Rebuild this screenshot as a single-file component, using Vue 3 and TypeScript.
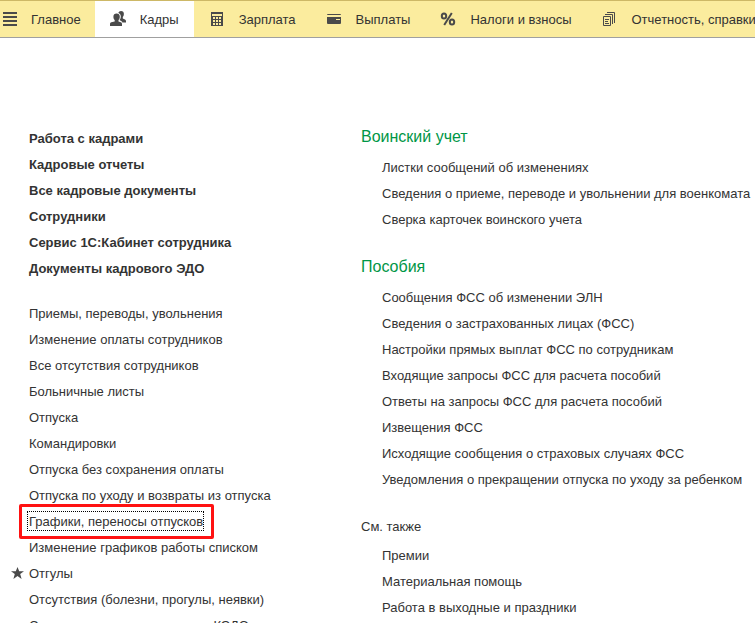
<script setup lang="ts">
interface Section { id: string; label: string; active?: boolean }
interface Item { label: string; starred?: boolean; focused?: boolean }
interface Group { title: string; minor?: boolean; items: string[] }

const sections: Section[] = [
  { id: 'main', label: 'Главное' },
  { id: 'staff', label: 'Кадры', active: true },
  { id: 'salary', label: 'Зарплата' },
  { id: 'payments', label: 'Выплаты' },
  { id: 'taxes', label: 'Налоги и взносы' },
  { id: 'reports', label: 'Отчетность, справки' },
]

const primary: string[] = [
  'Работа с кадрами',
  'Кадровые отчеты',
  'Все кадровые документы',
  'Сотрудники',
  'Сервис 1С:Кабинет сотрудника',
  'Документы кадрового ЭДО',
]

const items: Item[] = [
  { label: 'Приемы, переводы, увольнения' },
  { label: 'Изменение оплаты сотрудников' },
  { label: 'Все отсутствия сотрудников' },
  { label: 'Больничные листы' },
  { label: 'Отпуска' },
  { label: 'Командировки' },
  { label: 'Отпуска без сохранения оплаты' },
  { label: 'Отпуска по уходу и возвраты из отпуска' },
  { label: 'Графики, переносы отпусков', focused: true },
  { label: 'Изменение графиков работы списком' },
  { label: 'Отгулы', starred: true },
  { label: 'Отсутствия (болезни, прогулы, неявки)' },
  { label: 'Согласия на присоединение к КЭДО' },
]

const groups: Group[] = [
  {
    title: 'Воинский учет',
    items: [
      'Листки сообщений об изменениях',
      'Сведения о приеме, переводе и увольнении для военкомата',
      'Сверка карточек воинского учета',
    ],
  },
  {
    title: 'Пособия',
    items: [
      'Сообщения ФСС об изменении ЭЛН',
      'Сведения о застрахованных лицах (ФСС)',
      'Настройки прямых выплат ФСС по сотрудникам',
      'Входящие запросы ФСС для расчета пособий',
      'Ответы на запросы ФСС для расчета пособий',
      'Извещения ФСС',
      'Исходящие сообщения о страховых случаях ФСС',
      'Уведомления о прекращении отпуска по уходу за ребенком',
    ],
  },
  {
    title: 'См. также',
    minor: true,
    items: ['Премии', 'Материальная помощь', 'Работа в выходные и праздники'],
  },
]
</script>

<template>
  <div class="app">
    <nav class="bar">
      <a v-for="s in sections" :key="s.id" href="#" class="tab" :class="[s.id, { active: s.active }]">
        <svg v-if="s.id === 'main'" class="icon" width="16" height="16" viewBox="0 0 16 16" aria-hidden="true">
          <path d="M2 1h14v2H2zM2 5h14v2H2zM2 9h14v2H2zM2 13h14v2H2z" />
        </svg>
        <svg v-else-if="s.id === 'staff'" class="icon" width="16" height="16" viewBox="0 0 16 16" aria-hidden="true">
          <path d="M8.300 2C8.800.700 9.700 0 11 0c1.900 0 2.900 1.200 2.900 3 0 1.300-.4 2.300-1.100 3v1.500l2.200 1c.7.400 1 .9 1 1.700V11.500h-3.600C12 10.500 11.400 10 10.300 9.500L9.500 9c.9-1 1.300-2.100 1.300-3.500C10.800 3.700 9.900 2.500 8.300 2z" />
          <path d="M6.600 2.500c2 0 3.200 1.200 3.200 3.200 0 1.400-.5 2.600-1.300 3.300v1.500l2.300.8c.9.400 1.200 1 1.200 1.900V15H0v-1.800c0-.9.400-1.500 1.300-1.900l3.400-.8V9C3.900 8.300 3.400 7.100 3.400 5.700c0-2 1.200-3.200 3.200-3.200z" />
        </svg>
        <svg v-else-if="s.id === 'salary'" class="icon" width="16" height="16" viewBox="0 0 16 16" aria-hidden="true">
          <path fill-rule="evenodd" d="M2 1h12v14H2zM3 3v2h10V3zM4 6v2h2V6zM7 6v2h2V6zM10 6v2h2V6zM4 9v2h2V9zM7 9v2h2V9zM10 9v2h2V9zM4 12v2h2v-2zM7 12v2h2v-2zM10 12v2h2v-2z" />
        </svg>
        <svg v-else-if="s.id === 'payments'" class="icon" width="16" height="16" viewBox="0 0 16 16" aria-hidden="true">
          <path fill-rule="evenodd" d="M2 3h12q1 0 1 1H1q0-1 1-1zM1 6h14v6q0 1-1 1H2q-1 0-1-1zM10 8v1h4V8z" />
        </svg>
        <svg v-else-if="s.id === 'taxes'" class="icon stroke" width="16" height="16" viewBox="0 0 16 16" aria-hidden="true">
          <g stroke-width="2">
            <ellipse cx="4" cy="5" rx="2.200" ry="2.600" /><ellipse cx="12" cy="11" rx="2.200" ry="2.600" />
            <path d="M11.800 2L4.200 14" />
          </g>
        </svg>
        <svg v-else class="icon stroke" width="16" height="16" viewBox="0 0 16 16" aria-hidden="true">
          <path d="M1.500 5.500h7v9h-7zM3 8.500h4M3 10.500h3M3 12.500h4M3 3.500h7.500V13M5 1.500h7.500V12" />
        </svg>
        <span>{{ s.label }}</span>
      </a>
    </nav>

    <main class="content">
      <div class="left">
        <ul class="list strong">
          <li v-for="p in primary" :key="p"><a href="#">{{ p }}</a></li>
        </ul>
        <ul class="list">
          <li v-for="i in items" :key="i.label">
            <svg v-if="i.starred" class="star" width="13" height="12" viewBox="0 0 13 12" aria-hidden="true">
              <path d="M6.500 0l1.700 4.200H13L9.200 7l1.400 5-4.100-3-4.100 3 1.400-5L0 4.200h4.800z" />
            </svg>
            <a href="#" :class="{ focused: i.focused }">{{ i.label }}</a>
          </li>
        </ul>
      </div>

      <div class="right">
        <section v-for="g in groups" :key="g.title" class="group" :class="{ minor: g.minor }">
          <h2>{{ g.title }}</h2>
          <ul class="list">
            <li v-for="label in g.items" :key="label"><a href="#">{{ label }}</a></li>
          </ul>
        </section>
      </div>
    </main>
  </div>
</template>

<style>
body {
  margin: 0;
  background: #fff;
}
</style>

<style scoped>
.app {
  height: 100vh;
  display: flex;
  flex-direction: column;
  overflow: hidden;
  font-family: "Liberation Sans", Arial, sans-serif;
  font-size: 13px;
  line-height: 26px;
  color: #333;
}
a {
  color: inherit;
  text-decoration: none;
  white-space: nowrap;
}
.bar {
  flex: none;
  display: flex;
  height: 36px;
  background: #fbec9e;
  border-top: 1px solid #cdb866;
  border-bottom: 1px solid #a0a0a0;
  overflow: hidden;
}
.tab {
  flex: none;
  display: flex;
  align-items: center;
  gap: 14px;
  padding: 0 15px;
}
.tab.main {
  padding: 0 14px 0 1px;
}
.tab.active {
  background: #fff;
}
.tab span {
  line-height: 24px;
  padding-top: 2px;
}
.icon {
  flex: none;
  fill: #4a4a4a;
}
.icon.stroke {
  fill: none;
  stroke: #4a4a4a;
}
.content {
  display: grid;
  grid-template-columns: 332px 1fr;
  padding: 87px 0 0 29px;
}
.left {
  padding-top: 1px;
}
.list {
  list-style: none;
  margin: 0;
  padding: 0;
}
.list li {
  position: relative;
  height: 26px;
}
.strong {
  font-weight: bold;
  margin-bottom: 19px;
}
.star {
  position: absolute;
  left: -18px;
  top: 6px;
  fill: #4a4a4a;
}
.focused {
  position: relative;
}
.focused::before {
  content: "";
  position: absolute;
  inset: -3px -1px -2px -2px;
  border: 1px dotted #000;
}
.focused::after {
  content: "";
  position: absolute;
  inset: -10px -11px -10px -10px;
  border: 3px solid #f11;
  border-radius: 2px;
}
.group h2 {
  margin: 0 0 6px;
  font-size: 16px;
  font-weight: normal;
  line-height: 24px;
  color: #009646;
}
.group .list {
  padding-left: 21px;
  margin-bottom: 22px;
}
.group.minor h2 {
  margin-bottom: 5px;
  font-size: 13px;
  line-height: 23px;
  color: #333;
}
</style>
